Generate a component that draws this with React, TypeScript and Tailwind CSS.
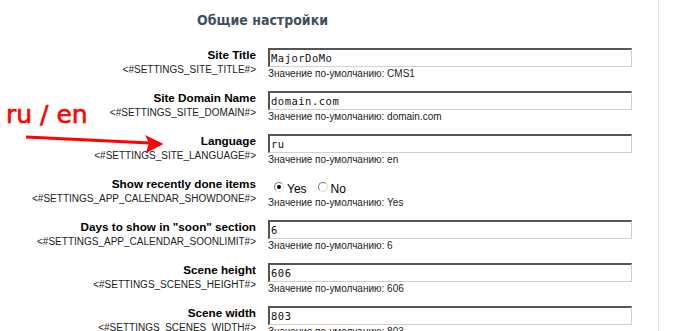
import React from 'react';

type Row = {
  label: string;
  code: string;
  value?: string;
  radio?: boolean;
  def: string;
};

const rows: Row[] = [
  { label: 'Site Title', code: '<#SETTINGS_SITE_TITLE#>', value: 'MajorDoMo', def: 'CMS1' },
  { label: 'Site Domain Name', code: '<#SETTINGS_SITE_DOMAIN#>', value: 'domain.com', def: 'domain.com' },
  { label: 'Language', code: '<#SETTINGS_SITE_LANGUAGE#>', value: 'ru', def: 'en' },
  { label: 'Show recently done items', code: '<#SETTINGS_APP_CALENDAR_SHOWDONE#>', radio: true, def: 'Yes' },
  { label: 'Days to show in "soon" section', code: '<#SETTINGS_APP_CALENDAR_SOONLIMIT#>', value: '6', def: '6' },
  { label: 'Scene height', code: '<#SETTINGS_SCENES_HEIGHT#>', value: '606', def: '606' },
  { label: 'Scene width', code: '<#SETTINGS_SCENES_WIDTH#>', value: '803', def: '803' },
];

function Radio({ checked }: { checked?: boolean }) {
  return (
    <span className="relative w-[10px] h-[10px] rounded-full bg-white border border-t-[#7a7a7a] border-l-[#7a7a7a] border-r-[#d8d8d8] border-b-[#d8d8d8] flex items-center justify-center">
      {checked && <span className="w-[4px] h-[4px] rounded-full bg-black" />}
    </span>
  );
}

function SettingRow({ row }: { row: Row }) {
  return (
    <div className="flex h-[43px]">
      {/* label */}
      <div className="w-[256px] text-right text-black font-['Liberation_Sans',Arial,sans-serif]">
        <div className="text-[11.7px] leading-[14px] font-bold whitespace-nowrap">{row.label}</div>
        <div className="text-[10px] leading-[12px] mt-[2px] text-[#222] whitespace-nowrap">{row.code}</div>
      </div>

      {/* field */}
      <div className="ml-[12px] w-[364px]">
        {row.radio ? (
          <div className="h-[19px] flex items-center pl-[6px] text-[12px] font-['Liberation_Sans',Arial,sans-serif]">
            <Radio checked />
            <span className="ml-[3px] mt-[5px]">Yes</span>
            <span className="ml-[11px]">
              <Radio />
            </span>
            <span className="ml-[3px] mt-[5px]">No</span>
          </div>
        ) : (
          <div className="h-[19px] border-t-2 border-l-2 border-t-[#555] border-l-[#555] border-r border-b border-r-[#d4d0c8] border-b-[#d4d0c8] bg-white pl-[1px] text-[10.5px] leading-[16px] tracking-[0.5px] text-[#111] font-['DejaVu_Sans_Mono',monospace]">
            {row.value}
          </div>
        )}
        <div className="mt-[1px] text-[10px] leading-[12px] text-[#222] whitespace-nowrap font-['Liberation_Sans',Arial,sans-serif]">
          Значение по-умолчанию: {row.def}
        </div>
      </div>
    </div>
  );
}

export default function App() {
  return (
    <div className="relative w-[684px] h-[331px] overflow-hidden bg-white flex">
      <div className="w-[658px] shrink-0">
        <div className="pl-[197px] pt-[12px] h-[48px] text-[14px] leading-[17px] font-bold text-[#3e4f62] font-['DejaVu_Sans_Condensed','Liberation_Sans',sans-serif]">
          Общие настройки
        </div>
        {rows.map((r) => (
          <SettingRow key={r.code} row={r} />
        ))}
      </div>
      <div className="w-px h-full bg-[#e4e4e4]" />

      {/* annotation */}
      <div className="absolute left-[6px] top-[103px] text-[25px] leading-[24px] text-[#ff0000] [-webkit-text-stroke:0.6px_#ff0000] font-['DejaVu_Sans',sans-serif] whitespace-nowrap">
        ru / en
      </div>
      <svg className="absolute left-0 top-0" width="684" height="331" viewBox="0 0 684 331">
        <line x1="26" y1="137" x2="150" y2="143" stroke="#ff0000" strokeWidth="3" />
        <polygon points="145,135 163.5,144 146,153 149,143" fill="#ff0000" />
      </svg>
    </div>
  );
}
